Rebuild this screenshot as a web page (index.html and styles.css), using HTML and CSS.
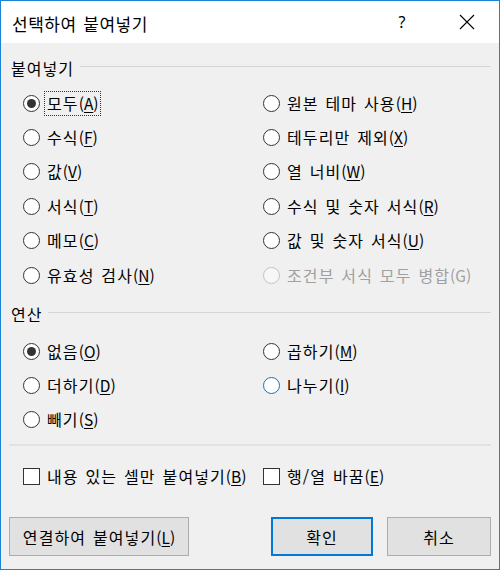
FILE: index.html
```html
<!DOCTYPE html>
<html lang="ko">
<head>
<meta charset="utf-8">
<title>선택하여 붙여넣기</title>
<link rel="stylesheet" href="styles.css">
</head>
<body>
<div class="window">
  <div class="titlebar">
    <span class="title">선택하여 붙여넣기</span>
    <span class="help">?</span>
    <span class="close"><svg width="16" height="16" viewBox="0 0 16 16"><path d="M1 1 L15 15 M15 1 L1 15" stroke="#000" stroke-width="1.1" fill="none"/></svg></span>
  </div>
  <div class="content">
    <div class="group-head"><span class="group-label">붙여넣기</span><span class="group-line"></span></div>
    <div class="grid grid-paste">
      <div class="opt"><span class="radio checked"></span><span class="lbl focus">모두<span class="key">(<u>A</u>)</span></span></div>
      <div class="opt"><span class="radio"></span><span class="lbl">원본 테마 사용<span class="key">(<u>H</u>)</span></span></div>
      <div class="opt"><span class="radio"></span><span class="lbl">수식<span class="key">(<u>F</u>)</span></span></div>
      <div class="opt"><span class="radio"></span><span class="lbl">테두리만 제외<span class="key">(<u>X</u>)</span></span></div>
      <div class="opt"><span class="radio"></span><span class="lbl">값<span class="key">(<u>V</u>)</span></span></div>
      <div class="opt"><span class="radio"></span><span class="lbl">열 너비<span class="key">(<u>W</u>)</span></span></div>
      <div class="opt"><span class="radio"></span><span class="lbl">서식<span class="key">(<u>T</u>)</span></span></div>
      <div class="opt"><span class="radio"></span><span class="lbl">수식 및 숫자 서식<span class="key">(<u>R</u>)</span></span></div>
      <div class="opt"><span class="radio"></span><span class="lbl">메모<span class="key">(<u>C</u>)</span></span></div>
      <div class="opt"><span class="radio"></span><span class="lbl">값 및 숫자 서식<span class="key">(<u>U</u>)</span></span></div>
      <div class="opt"><span class="radio"></span><span class="lbl">유효성 검사<span class="key">(<u>N</u>)</span></span></div>
      <div class="opt disabled"><span class="radio"></span><span class="lbl">조건부 서식 모두 병합<span class="key">(G)</span></span></div>
    </div>
    <div class="group-head group-ops"><span class="group-label">연산</span><span class="group-line"></span></div>
    <div class="grid grid-ops">
      <div class="opt"><span class="radio checked"></span><span class="lbl">없음<span class="key">(<u>O</u>)</span></span></div>
      <div class="opt"><span class="radio"></span><span class="lbl">곱하기<span class="key">(<u>M</u>)</span></span></div>
      <div class="opt"><span class="radio"></span><span class="lbl">더하기<span class="key">(<u>D</u>)</span></span></div>
      <div class="opt"><span class="radio hover"></span><span class="lbl">나누기<span class="key">(<u>I</u>)</span></span></div>
      <div class="opt"><span class="radio"></span><span class="lbl">빼기<span class="key">(<u>S</u>)</span></span></div>
    </div>
    <div class="separator"></div>
    <div class="grid grid-checks">
      <div class="opt"><span class="checkbox"></span><span class="lbl">내용 있는 셀만 붙여넣기<span class="key">(<u>B</u>)</span></span></div>
      <div class="opt"><span class="checkbox"></span><span class="lbl">행/열 바꿈<span class="key">(<u>E</u>)</span></span></div>
    </div>
    <div class="buttons">
      <button class="btn btn-link">연결하여 붙여넣기<span class="key">(<u>L</u>)</span></button>
      <span class="spacer"></span>
      <button class="btn btn-ok">확인</button>
      <button class="btn btn-cancel">취소</button>
    </div>
  </div>
</div>
</body>
</html>
```

FILE: styles.css
```css
* { box-sizing: border-box; }
html, body { margin: 0; padding: 0; }
body {
  font-family: "Noto Sans CJK KR", "Noto Sans", sans-serif;
  font-size: 16px;
  color: #000;
  background: #fff;
}
.window {
  width: 500px;
  height: 570px;
  border: 1px solid #1883d7;
  display: flex;
  flex-direction: column;
  background: #f0f0f0;
}
.titlebar {
  height: 42px;
  background: #fff;
  display: flex;
  align-items: center;
  padding-left: 11px;
  flex: none;
}
.title { font-size: 17px; flex: 1; line-height: 1; padding-top: 3px; letter-spacing: 0.5px; word-spacing: 1.5px; }
.help { font-size: 16px; width: 14px; text-align: center; margin-right: 50px; font-family: "Noto Sans", sans-serif; }
.close { width: 16px; height: 16px; margin-right: 24px; display: flex; }
.content {
  flex: 1;
  padding: 0 8px;
  display: flex;
  flex-direction: column;
}
.group-head {
  height: 20px;
  margin-top: 15px;
  display: flex;
  align-items: center;
  padding-left: 2px;
}
.group-label { line-height: 20px; letter-spacing: 1px; }
.group-line {
  flex: 1;
  height: 1px;
  background: #d5d5d5;
  margin-left: 6px;
  margin-top: -4px;
}
.grid {
  display: grid;
  grid-template-columns: 240px 1fr;
  margin-left: 14px;
}
.grid-paste { margin-top: 8px; grid-auto-rows: 34.4px; }
.group-ops { margin-top: 12px; }
.grid-ops { margin-top: 10px; grid-auto-rows: 34px; }
.opt {
  display: flex;
  align-items: center;
}
.radio {
  width: 17px;
  height: 17px;
  border: 1px solid #333;
  border-radius: 50%;
  background: #fff;
  display: flex;
  align-items: center;
  justify-content: center;
  flex: none;
}
.radio.checked::after {
  content: "";
  width: 9px;
  height: 9px;
  border-radius: 50%;
  background: #333;
}
.radio.hover { border-color: #0078d7; }
.lbl {
  margin-left: 4px;
  padding: 1px 2px;
  border: 1px dotted transparent;
  line-height: 21px;
  white-space: nowrap;
  letter-spacing: 1.1px;
  word-spacing: 1.3px;
}
.key { letter-spacing: 0; font-size: 15.5px; }
.lbl.focus { border-color: #333; padding-right: 1px; }
.disabled .radio { border-color: #c2c2c2; background: #f7f7f7; }
.disabled .lbl { color: #a0a0a0; }
u { text-decoration-thickness: 1px; text-underline-offset: 2px; }
.separator {
  height: 2px;
  background: #e2e2e2;
  margin-top: 8px;
  flex: none;
}
.grid-checks { margin-top: 15px; grid-auto-rows: 30px; }
.checkbox {
  width: 17px;
  height: 17px;
  border: 1px solid #333;
  background: #fff;
  flex: none;
}
.buttons {
  display: flex;
  margin-top: 26px;
  height: 39px;
}
.spacer { flex: 1; }
.btn {
  font-family: inherit;
  font-size: 16px;
  color: #000;
  background: #e1e1e1;
  border: 1px solid #adadad;
  height: 39px;
  padding: 0;
  letter-spacing: 1.1px;
  word-spacing: 1.3px;
}
.btn-link { width: 180px; }
.btn-ok { width: 102px; border: 2px solid #0078d7; margin-right: 14px; }
.btn-cancel { width: 104px; }
```
